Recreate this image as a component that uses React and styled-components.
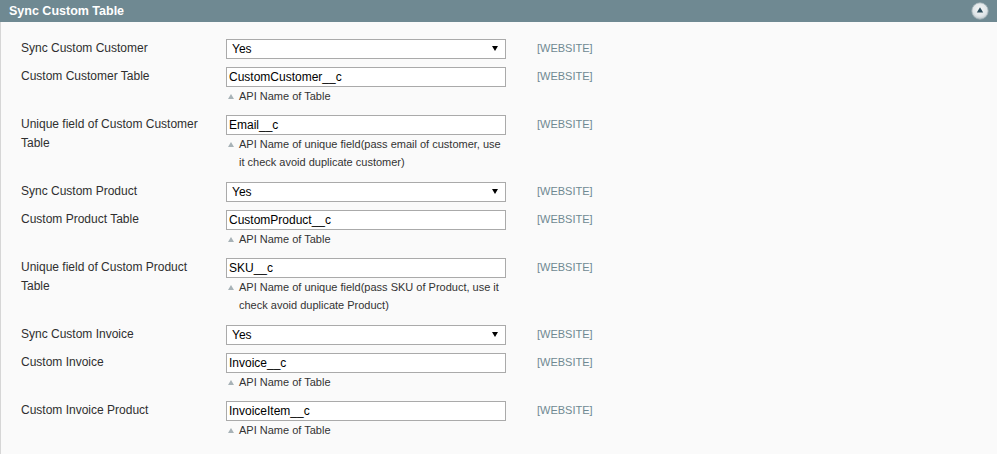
import React from 'react';
import styled, { createGlobalStyle } from 'styled-components';

const GlobalStyle = createGlobalStyle`
  html, body {
    margin: 0;
    padding: 0;
    background: #fff;
  }
  body {
    font-family: "Liberation Sans", Arial, sans-serif;
    font-size: 12px;
    color: #2f2f2f;
  }
`;

const fields = [
  { label: 'Sync Custom Customer', type: 'select', value: 'Yes' },
  { label: 'Custom Customer Table', value: 'CustomCustomer__c', note: ['API Name of Table'] },
  {
    label: 'Unique field of Custom Customer Table',
    value: 'Email__c',
    note: ['API Name of unique field(pass email of customer, use', 'it check avoid duplicate customer)']
  },
  { label: 'Sync Custom Product', type: 'select', value: 'Yes' },
  { label: 'Custom Product Table', value: 'CustomProduct__c', note: ['API Name of Table'] },
  {
    label: 'Unique field of Custom Product Table',
    value: 'SKU__c',
    note: ['API Name of unique field(pass SKU of Product, use it', 'check avoid duplicate Product)']
  },
  { label: 'Sync Custom Invoice', type: 'select', value: 'Yes' },
  { label: 'Custom Invoice', value: 'Invoice__c', note: ['API Name of Table'] },
  { label: 'Custom Invoice Product', value: 'InvoiceItem__c', note: ['API Name of Table'] }
];

const CollapseIcon = () => (
  <svg width="18" height="18" viewBox="0 0 18 18">
    <defs>
      <radialGradient id="knob" cx="50%" cy="40%" r="60%">
        <stop offset="0%" stopColor="#f4f6f7" />
        <stop offset="70%" stopColor="#dfe5e8" />
        <stop offset="100%" stopColor="#b9c4c9" />
      </radialGradient>
    </defs>
    <circle cx="9" cy="9" r="8.2" fill="url(#knob)" stroke="#a3b2b8" strokeWidth="0.8" />
    <path d="M9 5.2 L12.2 10.6 L5.8 10.6 Z" fill="#2c4c5b" />
  </svg>
);

const App = () => {
  return (
    <>
      <GlobalStyle />
      <Section>
        <Head>
          <Title>Sync Custom Table</Title>
          <CollapseIcon />
        </Head>
        <Body>
          {fields.map((field) => (
            <Row key={field.label}>
              <Label>{field.label}</Label>
              <Value>
                {field.type === 'select' ? (
                  <SelectWrap>
                    <Select defaultValue={field.value}>
                      <option>Yes</option>
                      <option>No</option>
                    </Select>
                    <Arrow width="6" height="5" viewBox="0 0 6 5">
                      <path d="M0 0 H6 L3 5 Z" fill="#000" />
                    </Arrow>
                  </SelectWrap>
                ) : (
                  <TextInput type="text" defaultValue={field.value} />
                )}
                {field.note && (
                  <Note $lines={field.note.length}>
                    {field.note.map((line, i) => (
                      <React.Fragment key={i}>
                        {i > 0 && <br />}
                        {line}
                      </React.Fragment>
                    ))}
                  </Note>
                )}
              </Value>
              <Scope>[WEBSITE]</Scope>
            </Row>
          ))}
        </Body>
      </Section>
    </>
  );
};

const Section = styled.div`
  background: #fafafa;
  border-left: 1px solid #d6d6d6;
  min-height: 454px;
  box-sizing: border-box;
`;

const Head = styled.div`
  height: 22px;
  background: #6f8992;
  display: flex;
  align-items: center;
  justify-content: space-between;
  padding: 0 8px 0 9px;
  margin-left: -1px;
  box-sizing: border-box;
`;

const Title = styled.h4`
  margin: 0;
  color: #fff;
  font-size: 12.5px;
  font-weight: bold;
  line-height: 20px;
`;

const Body = styled.div`
  padding: 13px 0 0 20px;
`;

const Row = styled.div`
  display: grid;
  grid-template-columns: 205px 280px 1fr;
  padding: 4px 0;
`;

const Label = styled.div`
  padding: 0 15px 0 0;
  line-height: 19px;
  font-size: 12px;
  color: #2f2f2f;
`;

const Value = styled.div`
  display: flex;
  flex-direction: column;
`;

const TextInput = styled.input`
  display: block;
  box-sizing: border-box;
  width: 280px;
  height: 20px;
  margin: 0;
  padding: 0 2px;
  border: 1px solid #aaa;
  background: #fff;
  font-family: "Liberation Sans", Arial, sans-serif;
  font-size: 12px;
  color: #000;
  outline: none;
`;

const SelectWrap = styled.div`
  position: relative;
  width: 280px;
  height: 20px;
`;

const Select = styled.select`
  display: block;
  appearance: none;
  -webkit-appearance: none;
  box-sizing: border-box;
  width: 280px;
  height: 20px;
  margin: 0;
  padding: 0 0 0 5px;
  border: 1px solid #aaa;
  border-radius: 0;
  background: #fff;
  font-family: "Liberation Sans", Arial, sans-serif;
  font-size: 12px;
  color: #000;
  outline: none;
`;

const Arrow = styled.svg`
  position: absolute;
  right: 8px;
  top: 7px;
  pointer-events: none;
`;

const Note = styled.div`
  position: relative;
  padding: 0 0 ${(p) => p.$lines + 1}px 13px;
  font-size: 11px;
  line-height: 18px;
  color: #333;
  white-space: nowrap;

  &::before {
    content: '';
    position: absolute;
    left: 2px;
    top: 7px;
    width: 0;
    height: 0;
    border-left: 3px solid transparent;
    border-right: 3px solid transparent;
    border-bottom: 5px solid #a7b2b7;
  }
`;

const Scope = styled.div`
  padding: 0 0 0 31px;
  line-height: 19px;
  font-size: 11px;
  color: #6f8992;
`;

export default App;
